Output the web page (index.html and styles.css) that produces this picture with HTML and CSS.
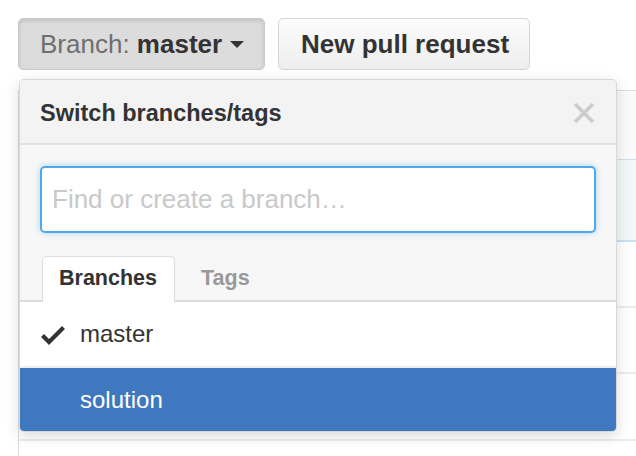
FILE: index.html
```html
<!DOCTYPE html>
<html>
<head>
<meta charset="utf-8">
<link rel="stylesheet" href="styles.css">
</head>
<body>
<div class="page">
  <div class="toolbar">
    <button class="btn btn-branch"><span class="btn-text"><span class="label">Branch:</span> <span class="name">master</span></span><span class="caret"></span></button>
    <button class="btn btn-new">New pull request</button>
  </div>
  <div class="files">
    <div class="row row-head"></div>
    <div class="row row-commit"></div>
    <div class="row row-a"></div>
    <div class="row row-b"></div>
    <div class="row row-c"></div>
    <div class="row row-d"></div>
  </div>

  <div class="menu">
    <div class="menu-header">
      <span class="menu-title">Switch branches/tags</span>
      <svg class="close" width="22" height="22" viewBox="0 0 22 22"><path d="M2 2 L20 20 M20 2 L2 20" stroke="#cccccc" stroke-width="3.6" fill="none"/></svg>
    </div>
    <div class="menu-filter">
      <input class="filter-input" type="text" placeholder="Find or create a branch…">
      <div class="tabs">
        <span class="tab tab-selected">Branches</span>
        <span class="tab">Tags</span>
      </div>
    </div>
    <div class="menu-list">
      <div class="item">
        <svg class="check" width="26" height="20" viewBox="0 0 26 20"><path d="M2.5 10.5 L9 17 L23.5 2.5" stroke="#333" stroke-width="4.2" fill="none"/></svg>
        <span>master</span>
      </div>
      <div class="item item-active">
        <span>solution</span>
      </div>
    </div>
  </div>
</div>
</body>
</html>
```

FILE: styles.css
```css
html, body {
  margin: 0;
  padding: 0;
  background: #fff;
  overflow: hidden;
}
body {
  font-family: "Liberation Sans", Arial, sans-serif;
  color: #333;
}
.page {
  position: relative;
  box-sizing: border-box;
  padding: 18px 0 0 18px;
  height: 456px;
  overflow: hidden;
}
.toolbar {
  display: flex;
  gap: 13px;
}
.btn {
  height: 52px;
  border: 1px solid #d5d5d5;
  border-radius: 5px;
  font-family: "Liberation Sans", Arial, sans-serif;
  font-size: 26px;
  color: #333;
  display: flex;
  align-items: center;
  white-space: pre;
}
.btn-branch {
  width: 247px;
  padding: 0 0 0 21px;
  background: #dcdcdc;
  border-color: #c8c8c8;
  box-shadow: inset 0 2px 4px rgba(0,0,0,0.12);
}
.btn-branch .label { color: #6f6f6f; }
.btn-branch .name { font-weight: bold; color: #333; }
.caret {
  display: inline-block;
  width: 0;
  height: 0;
  margin-left: 8px;
  border-left: 7px solid transparent;
  border-right: 7px solid transparent;
  border-top: 7px solid #333;
}
.btn-new {
  width: 252px;
  padding: 0 0 0 22px;
  font-weight: bold;
  background: linear-gradient(#fcfcfc, #eeeeee);
}
.files {
  margin-top: 20px;
  border-left: 1px solid #dddddd;
  border-top: 1px solid #dddddd;
}
.row {
  border-bottom: 2px solid #ececec;
}
.row-head { height: 68px; background: #fafafa; }
.row-commit {
  height: 80px;
  background: #f2f8fa;
  border-bottom-color: #c9e2ef;
  border-top: 1px solid #c9e2ef;
  margin-top: -2px;
}
.row-a { height: 64px; }
.row-b { height: 64px; }
.row-c { height: 65px; }
.row-d { height: 20px; border-bottom: none; }

.menu {
  position: absolute;
  left: 19px;
  top: 79px;
  width: 596px;
  border: 1px solid #d8d8d8;
  border-radius: 5px;
  background: #f7f7f7;
  box-shadow: 0 4px 14px rgba(0,0,0,0.15);
  overflow: hidden;
}
.menu-header {
  height: 63px;
  background: #f3f3f3;
  border-bottom: 2px solid #e2e2e2;
  display: flex;
  align-items: center;
  justify-content: space-between;
  padding: 0 21px 0 20px;
}
.menu-title {
  font-size: 23.5px;
  font-weight: bold;
  color: #333;
  margin-top: 3px;
}
.close { display: block; margin-top: 3px; }
.menu-filter {
  padding: 21px 20px 0 20px;
  border-bottom: 2px solid #dddddd;
}
.filter-input {
  display: block;
  box-sizing: border-box;
  width: 556px;
  height: 67px;
  margin: 0;
  border: 2px solid #51a7e8;
  border-radius: 5px;
  box-shadow: 0 0 6px rgba(81,167,232,0.45);
  padding: 0 10px;
  font-family: "Liberation Sans", Arial, sans-serif;
  font-size: 26px;
  color: #333;
  background: #fff;
  outline: none;
}
.filter-input::placeholder { color: #c9c9c9; }
.tabs {
  display: flex;
  gap: 9px;
  margin-top: 23px;
  padding-left: 2px;
}
.tab {
  box-sizing: border-box;
  height: 46px;
  padding: 0 17px 2px 16px;
  font-size: 21.5px;
  font-weight: bold;
  color: #999;
  display: flex;
  align-items: center;
  border: 1px solid transparent;
  border-bottom: none;
  margin-bottom: -2px;
}
.tab-selected {
  background: #fff;
  color: #333;
  border-color: #dddddd;
  border-radius: 5px 5px 0 0;
}
.menu-list { background: #fff; }
.item {
  height: 64px;
  display: flex;
  align-items: center;
  padding-left: 60px;
  position: relative;
  font-size: 24px;
  color: #333;
  border-bottom: 2px solid #eeeeee;
}
.check {
  position: absolute;
  left: 20px;
  top: 23px;
}
.item-active {
  height: 63px;
  background: #3f78be;
  color: #fff;
  border-bottom: none;
}
```
